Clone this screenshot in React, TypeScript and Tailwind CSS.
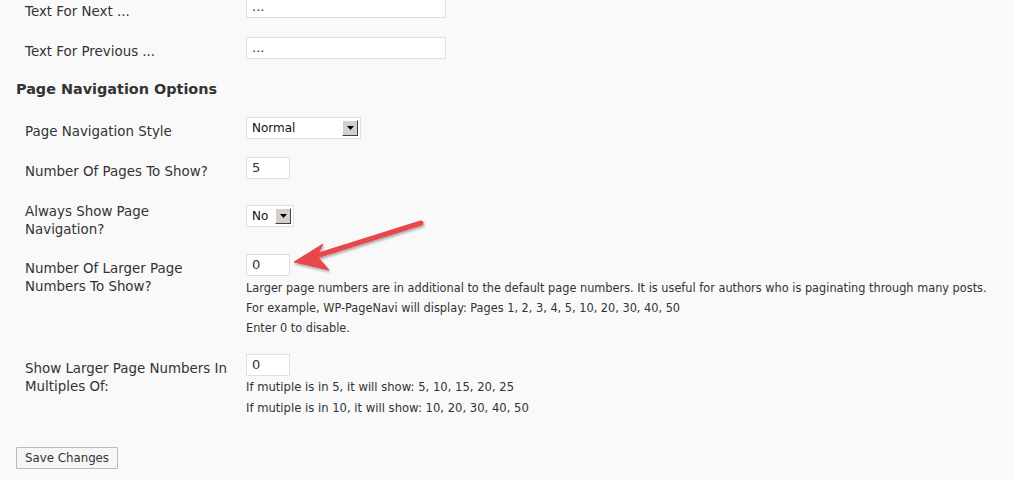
const labelCls = "w-[246px] shrink-0 pl-[25px] pr-[14px] text-[13.4px] leading-[18px] text-[#333]";
const descCls = "text-[12.6px] leading-[20px] text-[#333] font-['DejaVu_Sans_Condensed','DejaVu_Sans',sans-serif] whitespace-nowrap";
const multCls = "text-[11.6px] leading-[21px] text-[#333] whitespace-nowrap";

const TextInput = ({ value, width }: { value: string; width: string }) => (
    <div className={`${width} h-[22px] bg-white border border-[#dfdfdf] px-[5px] text-[13px] leading-[20px] text-[#333]`}>
        {value}
    </div>
);

const SelectBox = ({ value, width }: { value: string; width: string }) => (
    <div className={`${width} h-[22px] bg-white border border-[#dfdfdf] flex flex-row items-center justify-between pl-[5px] pr-[2px] text-[12px] text-[#111]`}>
        <span>{value}</span>
        <span className="w-[16px] h-[16px] bg-[#d4d0c8] border border-t-white border-l-white border-r-[#404040] border-b-[#404040] flex items-center justify-center">
            <svg width="7" height="4" viewBox="0 0 7 4">
                <polygon points="0,0 7,0 3.5,4" fill="#000" />
            </svg>
        </span>
    </div>
);

const Arrow = () => (
    <svg className="absolute left-0 top-0 pointer-events-none" width="1014" height="480" viewBox="0 0 1014 480">
        <defs>
            <filter id="sh" x="-20%" y="-20%" width="140%" height="160%">
                <feDropShadow dx="1" dy="2" stdDeviation="1.2" floodColor="#000" floodOpacity="0.3" />
            </filter>
        </defs>
        <g filter="url(#sh)" fill="#e8474b" stroke="#e8474b">
            <line x1="421" y1="223" x2="316" y2="256" strokeWidth="5" strokeLinecap="round" />
            <polygon points="294,262 323,244 317,256 329,270" strokeWidth="1" strokeLinejoin="round" />
        </g>
    </svg>
);

const App = () => {
    return (
        <div className="relative w-[1014px] h-[480px] overflow-hidden bg-[#f9f9f9] font-['DejaVu_Sans',Verdana,sans-serif]">
            <div className="flex flex-col">
                <div className="flex flex-row h-[41px] mt-[-4px]">
                    <p className={`${labelCls} pt-[7px]`}>Text For Next ...</p>
                    <TextInput value="..." width="w-[200px]" />
                </div>
                <div className="flex flex-row h-[41px]">
                    <p className={`${labelCls} pt-[6px]`}>Text For Previous ...</p>
                    <TextInput value="..." width="w-[200px]" />
                </div>
                <div className="h-[39px] pl-[16px] pt-[1px]">
                    <h3 className="text-[14.4px] leading-[20px] font-bold text-[#333]">Page Navigation Options</h3>
                </div>
                <div className="flex flex-row h-[40px]">
                    <p className={`${labelCls} pt-[6px]`}>Page Navigation Style</p>
                    <SelectBox value="Normal" width="w-[115px]" />
                </div>
                <div className="flex flex-row h-[45px]">
                    <p className={`${labelCls} pt-[6px]`}>Number Of Pages To Show?</p>
                    <TextInput value="5" width="w-[44px]" />
                </div>
                <div className="flex flex-row h-[52px]">
                    <p className={`${labelCls} pt-[1px]`}>Always Show Page Navigation?</p>
                    <div className="pt-[3px]">
                        <SelectBox value="No" width="w-[48px]" />
                    </div>
                </div>
                <div className="flex flex-row h-[100px]">
                    <p className={`${labelCls} pt-[6px]`}>Number Of Larger Page Numbers To Show?</p>
                    <div className="flex flex-col">
                        <TextInput value="0" width="w-[44px]" />
                        <div className="pt-[2px]">
                            <p className={descCls}>Larger page numbers are in additional to the default page numbers. It is useful for authors who is paginating through many posts.</p>
                            <p className={descCls}>For example, WP-PageNavi will display: Pages 1, 2, 3, 4, 5, 10, 20, 30, 40, 50</p>
                            <p className={descCls}>Enter 0 to disable.</p>
                        </div>
                    </div>
                </div>
                <div className="flex flex-row h-[91px]">
                    <p className={`${labelCls} pt-[6px]`}>Show Larger Page Numbers In Multiples Of:</p>
                    <div className="flex flex-col">
                        <TextInput value="0" width="w-[44px]" />
                        <div className="pt-[1px]">
                            <p className={multCls}>If mutiple is in 5, it will show: 5, 10, 15, 20, 25</p>
                            <p className={multCls}>If mutiple is in 10, it will show: 10, 20, 30, 40, 50</p>
                        </div>
                    </div>
                </div>
                <div className="pl-[16px]">
                    <button className="h-[22px] px-[8px] bg-[#f6f6f6] border border-[#bbb] rounded-[1px] text-[11.8px] leading-[20px] text-[#333]">
                        Save Changes
                    </button>
                </div>
            </div>
            <Arrow />
        </div>
    );
};

export default App;
